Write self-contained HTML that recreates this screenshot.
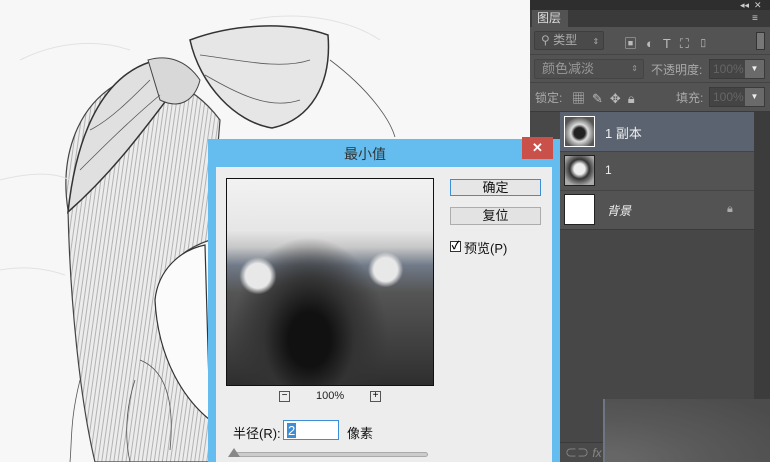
<!DOCTYPE html>
<html><head><meta charset="utf-8"><style>
*{margin:0;padding:0;box-sizing:border-box}
body{width:770px;height:462px;overflow:hidden;position:relative;background:#f4f4f4;font-family:"Liberation Sans","Noto Sans CJK SC",sans-serif;font-size:12px}
.a{position:absolute}
</style></head><body>
<svg class="a" style="left:0;top:0" width="530" height="462" viewBox="0 0 530 462">
<defs>
<pattern id="h" width="4" height="30" patternUnits="userSpaceOnUse" patternTransform="rotate(8)">
<rect width="4" height="30" fill="#ececec"/><path d="M1 0 L1 30" stroke="#9a9a9a" stroke-width=".7"/>
</pattern>
</defs>
<rect width="530" height="462" fill="#f7f7f7"/>
<!-- hair mass -->
<path d="M68 210 C60 160 75 110 115 85 C150 70 190 80 220 120 L210 240 C180 250 160 270 155 300 C160 360 190 400 210 420 L210 462 L95 462 C80 400 70 300 68 210Z" fill="url(#h)" stroke="#444" stroke-width="1.2"/>
<!-- face -->
<path d="M205 245 C180 250 158 270 155 300 C158 360 185 400 210 420Z" fill="#fbfbfb" stroke="#333" stroke-width="1.2"/>
<!-- bow -->
<path d="M190 40 C230 25 285 20 328 35 C332 85 310 120 272 128 C235 122 200 85 190 40Z" fill="#e6e6e6" stroke="#333" stroke-width="1.5"/>
<path d="M150 62 C110 75 78 120 68 212 C110 175 140 135 168 98Z" fill="#e0e0e0" stroke="#333" stroke-width="1.5"/>
<path d="M148 60 C165 55 185 58 200 80 C195 100 180 110 160 100Z" fill="#d8d8d8" stroke="#444"/>
<g fill="none" stroke="#555" stroke-width=".8">
<path d="M200 55 C240 60 280 70 310 60 M205 75 C240 95 270 110 300 100 M90 130 C110 120 130 100 150 80 M80 170 C100 150 130 120 160 95"/>
<path d="M330 60 C370 90 390 120 395 137"/>
<path d="M140 360 C165 370 175 400 170 450 M135 380 C125 410 125 440 130 462"/>
<path d="M80 380 C70 420 72 440 70 462"/>
</g>
<g fill="none" stroke="#e2e2e2" stroke-width="1">
<path d="M0 180 C40 170 60 175 70 180 M0 270 C30 265 50 270 65 275 M250 20 C300 10 350 20 380 40 M20 60 C60 40 100 40 130 50"/>
</g>
</svg>
<!-- Photoshop panel -->
<div class="a" style="left:530px;top:0;width:240px;height:462px;background:#535353"></div>
<div class="a" style="left:530px;top:0;width:240px;height:10px;background:#2e2e2e"></div>
<div class="a" style="left:740px;top:0;color:#ccc;font-size:9px">◂◂ &nbsp;✕</div>
<div class="a" style="left:530px;top:10px;width:240px;height:17px;background:#3a3a3a"></div>
<div class="a" style="left:532px;top:10px;width:36px;height:17px;background:#535353;color:#ddd;padding-left:5px;line-height:17px">图层</div>
<div class="a" style="left:752px;top:13px;color:#ccc;font-size:10px">≡</div>
<div class="a" style="left:534px;top:31px;width:70px;height:19px;background:#4a4a4a;border:1px solid #3e3e3e;border-radius:2px;color:#aaa;line-height:17px;padding-left:6px">⚲ 类型 <span style="font-size:8px;margin-left:12px">⇕</span></div>
<div class="a" style="left:624px;top:33px;color:#bbb;font-size:13px;letter-spacing:9px">▣◐T⛶▯</div>
<div class="a" style="left:756px;top:32px;width:9px;height:18px;background:#777;border:1px solid #333"></div>
<div class="a" style="left:530px;top:54px;width:240px;height:1px;background:#444"></div>
<div class="a" style="left:534px;top:59px;width:110px;height:20px;background:#4e4e4e;border:1px solid #444;border-radius:2px;color:#999;line-height:18px;padding-left:7px;font-size:13px">颜色减淡<span style="font-size:8px;position:absolute;right:5px">⇕</span></div>
<div class="a" style="left:651px;top:61px;color:#aaa;font-size:12px">不透明度:</div>
<div class="a" style="left:709px;top:59px;width:56px;height:20px;background:#444;border:1px solid #3a3a3a;color:#666;line-height:18px;padding-left:3px;font-size:12px">100%</div>
<div class="a" style="left:745px;top:60px;width:19px;height:18px;background:#6a6a6a;color:#eee;font-size:8px;text-align:center;line-height:18px">▼</div>
<div class="a" style="left:530px;top:82px;width:240px;height:1px;background:#444"></div>
<div class="a" style="left:535px;top:89px;color:#aaa">锁定:</div>
<div class="a" style="left:572px;top:88px;color:#bbb;font-size:13px;letter-spacing:7px">▦✎✥🔒︎</div>
<div class="a" style="left:676px;top:89px;color:#aaa">填充:</div>
<div class="a" style="left:709px;top:87px;width:56px;height:20px;background:#444;border:1px solid #3a3a3a;color:#666;line-height:18px;padding-left:3px">100%</div>
<div class="a" style="left:745px;top:88px;width:19px;height:18px;background:#6a6a6a;color:#eee;font-size:8px;text-align:center;line-height:18px">▼</div>
<div class="a" style="left:530px;top:111px;width:240px;height:1px;background:#3a3a3a"></div>
<div class="a" style="left:530px;top:112px;width:30px;height:330px;background:#484848"></div>
<div class="a" style="left:560px;top:112px;width:194px;height:330px;background:#474747"></div>
<div class="a" style="left:754px;top:112px;width:16px;height:330px;background:#3c3c3c"></div>
<div class="a" style="left:560px;top:112px;width:194px;height:39px;background:#5b6370"></div>
<div class="a" style="left:560px;top:151px;width:194px;height:39px;background:#535353;border-top:1px solid #444"></div>
<div class="a" style="left:560px;top:190px;width:194px;height:40px;background:#535353;border-top:1px solid #444;border-bottom:1px solid #3a3a3a"></div>
<div class="a" style="left:564px;top:116px;width:31px;height:31px;background:radial-gradient(circle at 50% 55%,#222 25%,#ddd 40%,#555 75%);border:1px solid #fff"></div>
<div class="a" style="left:564px;top:155px;width:31px;height:31px;background:radial-gradient(circle at 50% 45%,#eee 25%,#333 45%,#aaa 80%);border:1px solid #222"></div>
<div class="a" style="left:564px;top:194px;width:31px;height:31px;background:#fff;border:1px solid #222"></div>
<div class="a" style="left:605px;top:123px;color:#eee;font-size:13px">1 副本</div>
<div class="a" style="left:605px;top:163px;color:#eee;font-size:12px">1</div>
<div class="a" style="left:607px;top:202px;color:#eee;font-size:12px;font-style:italic">背景</div>
<div class="a" style="left:727px;top:203px;color:#aaa;font-size:11px">🔒︎</div>
<div class="a" style="left:530px;top:442px;width:240px;height:20px;background:#4a4a4a;border-top:1px solid #3a3a3a"></div>
<div class="a" style="left:565px;top:444px;color:#888;font-size:12px">⊂⊃ <i>fx</i></div>
<div class="a" style="left:603px;top:399px;width:167px;height:63px;background:radial-gradient(ellipse at 0% 100%,#666 10%,#595959 45%,#4c4c4c 90%);border-left:2px solid #6e7684"></div>
<!-- dialog -->
<div class="a" style="left:208px;top:139px;width:352px;height:323px;background:#64bdee"></div>
<div class="a" style="left:208px;top:144px;width:314px;text-align:center;color:#333;font-size:14px">最小值</div>
<div class="a" style="left:522px;top:137px;width:31px;height:22px;background:#c9514a;color:#fff;text-align:center;line-height:22px;font-size:13px;font-weight:bold">✕</div>
<div class="a" style="left:216px;top:167px;width:336px;height:295px;background:#ededed"></div>
<div class="a" style="left:226px;top:178px;width:208px;height:208px;border:1px solid #111;background:
radial-gradient(circle at 15% 47%,#e8e8e8 6%,transparent 9%),
radial-gradient(circle at 77% 44%,#e8e8e8 6%,transparent 9%),
radial-gradient(ellipse at 40% 78%,#111 12%,#333 26%,transparent 45%),
linear-gradient(#f2f2f2 0%,#e6e6e6 25%,#c8c8c8 33%,#707a88 42%,#555 55%,#3c3c3c 85%,#2e2e2e 100%)"></div>
<div class="a" style="left:279px;top:391px;width:11px;height:11px;border:1px solid #555;font-size:10px;line-height:8px;text-align:center">−</div>
<div class="a" style="left:316px;top:390px;font-size:11px;color:#222">100%</div>
<div class="a" style="left:370px;top:391px;width:11px;height:11px;border:1px solid #555;font-size:10px;line-height:8px;text-align:center">+</div>
<div class="a" style="left:450px;top:179px;width:91px;height:17px;border:1px solid #3c8fd6;background:#e6e6e6;text-align:center;line-height:15px;font-size:13px;color:#111">确定</div>
<div class="a" style="left:450px;top:207px;width:91px;height:18px;border:1px solid #adadad;background:#e3e3e3;text-align:center;line-height:16px;font-size:13px;color:#111">复位</div>
<div class="a" style="left:450px;top:241px;width:11px;height:11px;border:1px solid #333;background:#fff;font-size:11px;line-height:9px;text-align:center;font-weight:bold">✓</div>
<div class="a" style="left:464px;top:238px;font-size:13px;color:#111">预览(P)</div>
<div class="a" style="left:233px;top:423px;font-size:13px;color:#111">半径(R):</div>
<div class="a" style="left:283px;top:420px;width:56px;height:20px;border:1px solid #3c8fd6;background:#fff"><span style="display:inline-block;margin:2px 0 0 3px;background:#3c8fd6;color:#fff;font-size:13px;line-height:15px;padding:0 1px">2</span></div>
<div class="a" style="left:347px;top:423px;font-size:13px;color:#111">像素</div>
<div class="a" style="left:232px;top:452px;width:196px;height:5px;border:1px solid #aaa;background:#ccc;border-radius:3px"></div>
<div class="a" style="left:228px;top:448px;width:0;height:0;border-left:6px solid transparent;border-right:6px solid transparent;border-bottom:9px solid #888"></div>
</body></html>
